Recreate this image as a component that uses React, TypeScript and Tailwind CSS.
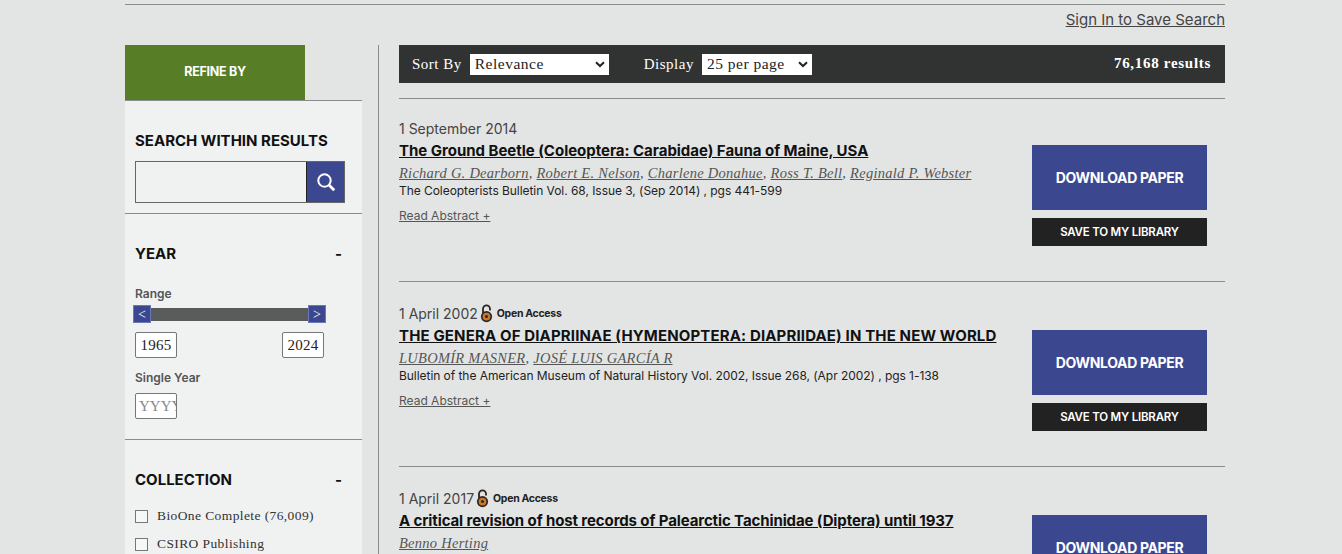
import React from "react";

const sans = "font-['Inter','Open_Sans',sans-serif]";
const serifFont = "font-['Liberation_Serif',serif]";

function Lock({ className = "" }: { className?: string }) {
  return (
    <svg width="13" height="19" viewBox="0 0 13 19" className={className}>
      <path d="M3 9 V4.8 a3.5 3.5 0 0 1 7 0 V6.5" fill="none" stroke="#2b2622" strokeWidth="1.8" />
      <circle cx="6.5" cy="12.6" r="5.6" fill="#2b2622" />
      <circle cx="6.5" cy="12.6" r="3.9" fill="#c9782a" />
      <circle cx="6.5" cy="12.6" r="1.5" fill="#2b2622" />
    </svg>
  );
}

function Result({
  date,
  oa,
  title,
  titleClass,
  authors,
  journal,
  height,
}: {
  date: string;
  oa?: boolean;
  title: string;
  titleClass: string;
  authors: string[];
  journal?: string;
  height: string;
}) {
  return (
    <div className={`flex justify-between border-t border-[#8a8c8b] ${height}`}>
      <div className={oa ? "pt-[21px]" : "pt-[19px]"}>
        <div className={`flex items-center h-[20px] text-[14px] text-[#444] ${sans}`}>
          <span>{date}</span>
          {oa && (
            <>
              <Lock className="ml-[2px]" />
              <span className="ml-[4px] mt-[2px] text-[10.5px] font-bold text-[#222] tracking-[-0.3px]">Open Access</span>
            </>
          )}
        </div>
        <a className={`block mt-[2px] leading-[22px] text-[15px] font-bold text-[#111] underline ${titleClass} ${sans}`}>{title}</a>
        <div className={`leading-[22px] italic text-[#555] ${serifFont}`}>
          {authors.map((a, i) => (
            <span key={a} className="text-[14.5px] tracking-[0.26px]">
              <a className="underline">{a}</a>
              {i < authors.length - 1 ? ", " : ""}
            </span>
          ))}
        </div>
        {journal && <div className={`leading-[14px] text-[12px] tracking-[-0.05px] text-[#222] ${sans}`}>{journal}</div>}
        {journal && <a className={`block mt-[10px] leading-[16px] text-[12px] text-[#555] underline ${sans}`}>Read Abstract +</a>}
      </div>
      <div className={`${oa ? "mt-[48px]" : "mt-[46px]"} mr-[18px] w-[175px] shrink-0`}>
        <div className={`h-[65px] bg-[#3b4890] flex items-center justify-center text-white text-[14px] font-bold tracking-[-0.35px] ${sans}`}>
          DOWNLOAD PAPER
        </div>
        <div className={`mt-[8px] h-[28px] pt-[2px] bg-[#222] flex items-center justify-center text-white text-[11.5px] font-semibold tracking-[-0.2px] ${sans}`}>
          SAVE TO MY LIBRARY
        </div>
      </div>
    </div>
  );
}

function Check({ label }: { label: string }) {
  return (
    <div className="flex items-center h-[28px]">
      <span className="w-[13px] h-[13px] border border-[#777] bg-white/40 mr-[9px]" />
      <span className={`text-[13.5px] text-[#333] tracking-[0.4px] ${serifFont}`}>{label}</span>
    </div>
  );
}

function Chevron() {
  return (
    <svg width="10" height="7" viewBox="0 0 10 7" fill="none" stroke="#222" strokeWidth="2">
      <path d="M1 1.2 L5 5 L9 1.2" />
    </svg>
  );
}

export default function App() {
  return (
    <div className="h-[554px] overflow-hidden bg-[#e3e5e4]">
      <div className="w-[1100px] ml-[125px] pt-[4px]">
        <div className="border-t border-[#8a8c8b] h-[41px] flex justify-end pt-[4px]">
          <a className={`text-[15px] leading-[22px] text-[#444] underline ${sans}`}>Sign In to Save Search</a>
        </div>
        <div className="flex">
          <aside className="w-[237px] shrink-0">
            <div className={`w-[180px] h-[55px] bg-[#577d26] flex items-center justify-center text-white text-[12.5px] font-bold tracking-[-0.3px] ${sans}`}>
              REFINE BY
            </div>
            <div className="bg-[#f0f2f2] h-[454px]">
              <div className="border-t border-b border-[#8a8c8b] h-[114px] px-[10px] pt-[30px]">
                <div className={`text-[15px] leading-[20px] font-bold text-[#111] ${sans}`}>SEARCH WITHIN RESULTS</div>
                <div className="mt-[10px] flex w-[210px] h-[42px] border border-[#666]">
                  <div className="flex-1 border-r border-[#222]" />
                  <div className="w-[37px] bg-[#3b4890] flex items-center justify-center">
                    <svg width="20" height="20" viewBox="0 0 20 20" fill="none" stroke="#fff">
                      <circle cx="8.5" cy="8.5" r="6.2" strokeWidth="2" />
                      <path d="M13 13 L18.2 18.2" strokeWidth="2.8" />
                    </svg>
                  </div>
                </div>
              </div>
              <div className="border-b border-[#8a8c8b] h-[226px] pl-[10px] pr-[20px] pt-[30px]">
                <div className={`flex justify-between text-[15px] leading-[20px] font-bold text-[#111] ${sans}`}>
                  <span>YEAR</span>
                  <span>-</span>
                </div>
                <div className={`mt-[22px] text-[12px] leading-[16px] font-semibold text-[#555] ${sans}`}>Range</div>
                <div className="mt-[3px] -ml-[2px] flex items-center w-[193px] h-[18px]">
                  <span className={`w-[18px] h-[18px] bg-[#3b4890] border border-[#6b78bb] flex items-center justify-center text-white text-[14px] ${serifFont}`}>&lt;</span>
                  <span className="flex-1 h-[13px] bg-[#5a5b5b]" />
                  <span className={`w-[18px] h-[18px] bg-[#3b4890] border border-[#6b78bb] flex items-center justify-center text-white text-[14px] ${serifFont}`}>&gt;</span>
                </div>
                <div className="mt-[9px] flex justify-between w-[189px]">
                  <div className={`w-[42px] h-[26px] bg-white border border-[#777] rounded-[2px] flex items-center justify-center text-[15px] text-[#222] tracking-[0.3px] ${serifFont}`}>1965</div>
                  <div className={`w-[42px] h-[26px] bg-white border border-[#777] rounded-[2px] flex items-center justify-center text-[15px] text-[#222] tracking-[0.3px] ${serifFont}`}>2024</div>
                </div>
                <div className={`mt-[12px] text-[12px] leading-[16px] font-semibold text-[#555] ${sans}`}>Single Year</div>
                <div className={`mt-[7px] w-[42px] h-[26px] bg-white border border-[#777] rounded-[2px] flex items-center pl-[3px] overflow-hidden text-[15px] text-[#888] whitespace-nowrap ${serifFont}`}>YYYY</div>
              </div>
              <div className="pl-[10px] pr-[20px] pt-[30px]">
                <div className={`flex justify-between text-[15px] leading-[20px] font-bold text-[#111] ${sans}`}>
                  <span>COLLECTION</span>
                  <span>-</span>
                </div>
                <div className="mt-[12px]">
                  <Check label="BioOne Complete (76,009)" />
                  <Check label="CSIRO Publishing" />
                </div>
              </div>
            </div>
          </aside>
          <div className="ml-[16px] border-l border-[#8a8c8b] pl-[20px] w-[847px] h-[510px]">
            <div className={`h-[38px] bg-[#313332] flex items-center pl-[13px] pr-[14px] text-white text-[15px] tracking-[0.5px] ${serifFont}`}>
              <span className="mt-[1px]">Sort By</span>
              <div className="ml-[8px] w-[139px] h-[21px] bg-white text-[#222] flex items-center justify-between pl-[5px] pr-[4px]">
                <span className="text-[15.5px]">Relevance</span>
                <Chevron />
              </div>
              <span className="ml-[35px] mt-[1px]">Display</span>
              <div className="ml-[8px] w-[110px] h-[21px] bg-white text-[#222] flex items-center justify-between pl-[5px] pr-[4px]">
                <span className="text-[15.5px]">25 per page</span>
                <Chevron />
              </div>
              <span className="ml-auto font-bold tracking-[0.7px] -mt-[1px]">76,168 results</span>
            </div>
            <div className="h-[15px]" />
            <Result
              height="h-[183px]"
              date="1 September 2014"
              title="The Ground Beetle (Coleoptera: Carabidae) Fauna of Maine, USA"
              titleClass="tracking-[-0.02px]"
              authors={["Richard G. Dearborn", "Robert E. Nelson", "Charlene Donahue", "Ross T. Bell", "Reginald P. Webster"]}
              journal="The Coleopterists Bulletin Vol. 68, Issue 3, (Sep 2014) , pgs 441-599"
            />
            <Result
              height="h-[185px]"
              date="1 April 2002"
              oa
              title="THE GENERA OF DIAPRIINAE (HYMENOPTERA: DIAPRIIDAE) IN THE NEW WORLD"
              titleClass="tracking-[0.14px]"
              authors={["LUBOMÍR MASNER", "JOSÉ LUIS GARCÍA R"]}
              journal="Bulletin of the American Museum of Natural History Vol. 2002, Issue 268, (Apr 2002) , pgs 1-138"
            />
            <Result
              height="h-[120px]"
              date="1 April 2017"
              oa
              title="A critical revision of host records of Palearctic Tachinidae (Diptera) until 1937"
              titleClass="tracking-[-0.11px]"
              authors={["Benno Herting"]}
            />
          </div>
        </div>
      </div>
    </div>
  );
}
